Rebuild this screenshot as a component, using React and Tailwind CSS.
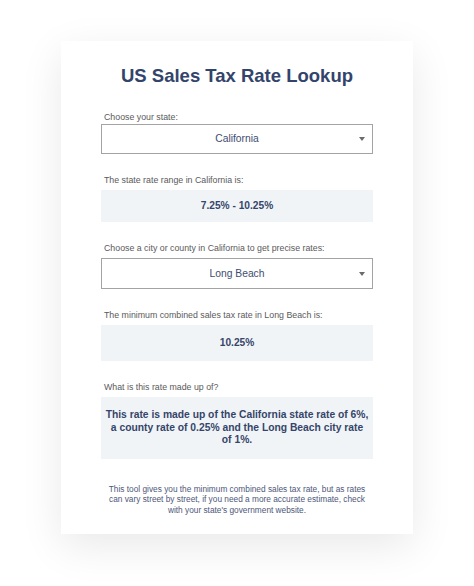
function Caret() {
    return (
        <svg width="6" height="4" viewBox="0 0 6 4" className="absolute right-[7px] top-1/2 -translate-y-1/2">
            <path d="M0 0 L6 0 L3 4 Z" fill="#6b6b6b" />
        </svg>
    );
}

function Label({ children, tight }) {
    return <p className={`text-[8.8px] leading-[11px] text-[#5a5a5a] pl-[3px] ${tight ? "mb-[1px]" : "mb-[4px]"}`}>{children}</p>;
}

function Select({ value, height }) {
    return (
        <div className={`relative border border-[#a3a3a3] flex items-center justify-center text-[10.3px] text-[#3e4d70] ${height}`}>
            {value}
            <Caret />
        </div>
    );
}

function Result({ children, height }) {
    return (
        <div className={`bg-[#f1f4f7] flex items-center justify-center font-bold text-[10.2px] text-[#35456a] ${height}`}>
            {children}
        </div>
    );
}

export default function App() {
    return (
        <div className="w-[474px] h-[586px] bg-white pt-[41px]" style={{ fontFamily: '"Liberation Sans", Arial, sans-serif' }}>
            <div className="mx-auto w-[352px] bg-white shadow-[0_12px_40px_rgba(0,0,0,0.09)] px-10 pt-[24px] pb-[19px]">
                <h1 className="text-center font-bold text-[18.5px] leading-[22px] text-[#33446c]">US Sales Tax Rate Lookup</h1>

                <div className="mt-[25px]">
                    <Label tight>Choose your state:</Label>
                    <Select value="California" height="h-[30px]" />
                </div>

                <div className="mt-[21px]">
                    <Label>The state rate range in California is:</Label>
                    <Result height="h-[32px]">7.25% - 10.25%</Result>
                </div>

                <div className="mt-[21px]">
                    <Label>Choose a city or county in California to get precise rates:</Label>
                    <Select value="Long Beach" height="h-[31px]" />
                </div>

                <div className="mt-[21px]">
                    <Label>The minimum combined sales tax rate in Long Beach is:</Label>
                    <Result height="h-[36px]">10.25%</Result>
                </div>

                <div className="mt-[21px]">
                    <Label>What is this rate made up of?</Label>
                    <div className="bg-[#f1f4f7] h-[62px] flex items-center justify-center">
                        <p className="w-[264px] text-center font-bold text-[10.3px] leading-[12.4px] text-[#35456a]">
                            This rate is made up of the California state rate of 6%, a county rate of 0.25% and the Long Beach city rate of 1%.
                        </p>
                    </div>
                </div>

                <p className="mt-[25px] px-[6px] text-center text-[8.3px] leading-[10.3px] text-[#4d5779]">
                    This tool gives you the minimum combined sales tax rate, but as rates can vary street by street, if you need a more accurate estimate, check with your state's government website.
                </p>
            </div>
        </div>
    );
}
